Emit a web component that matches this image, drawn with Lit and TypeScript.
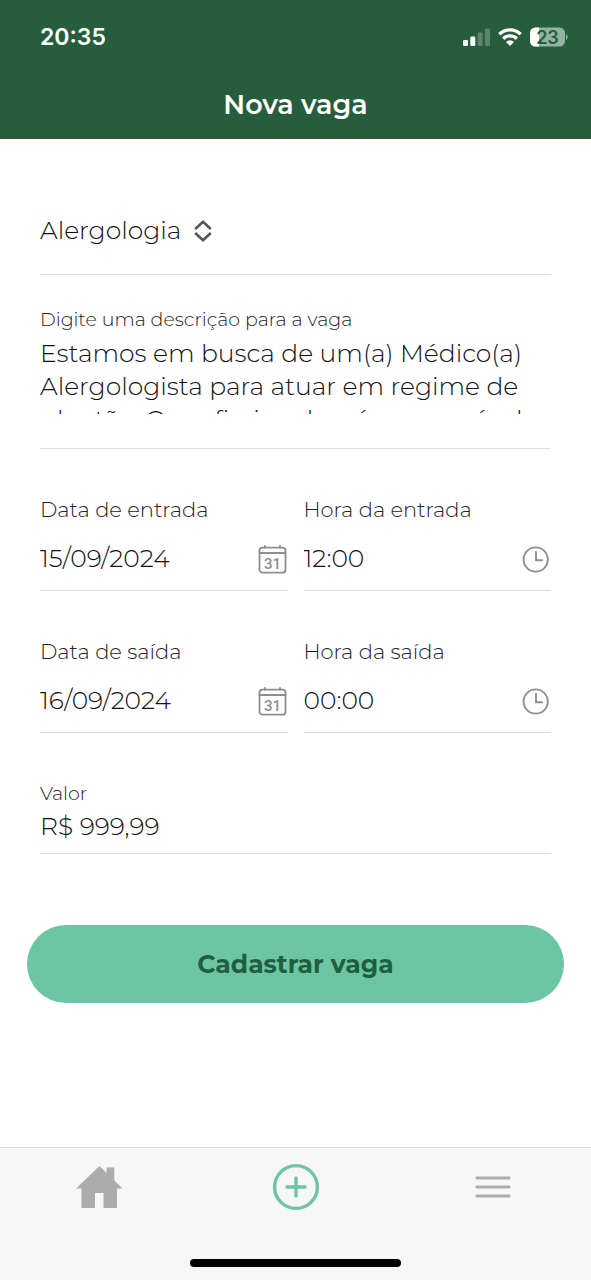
import { LitElement, html, css } from "lit";
import { customElement } from "lit/decorators.js";

const description =
  "Estamos em busca de um(a) Médico(a) Alergologista para atuar em regime de plantão. O profissional será responsável";

const calendarIcon = html`
  <svg class="icon" width="30" height="30" viewBox="0 0 30 30" aria-hidden="true">
    <g fill="none" stroke="#8e8e93" stroke-width="1.8" stroke-linecap="round">
      <rect x="1.5" y="3.7" width="26" height="25" rx="3" />
      <path d="M1.5 9H27.5M7 2V3.7M22 2V3.7" />
    </g>
    <text class="day" x="14.5" y="24.5" text-anchor="middle">31</text>
  </svg>
`;

const clockIcon = html`
  <svg class="icon" width="30" height="30" viewBox="0 0 30 30" aria-hidden="true">
    <g fill="none" stroke="#8e8e93" stroke-width="1.9" stroke-linecap="round" stroke-linejoin="round">
      <circle cx="14.7" cy="15.5" r="12.1" />
      <path d="M15 8V16.2H21" />
    </g>
  </svg>
`;

@customElement("status-bar")
export class StatusBar extends LitElement {
  static styles = css`
    :host {
      display: flex;
      align-items: center;
      justify-content: space-between;
      height: 74px;
      padding: 0 23px 0 40px;
      color: #fff;
    }
    .time {
      font: 600 23px/28px Inter, "Liberation Sans", sans-serif;
    }
    .system {
      display: flex;
      align-items: center;
      gap: 8px;
    }
    .system svg {
      display: block;
    }
    .level {
      font: 600 18px Inter, "Liberation Sans", sans-serif;
      fill: #265d3d;
    }
  `;

  render() {
    return html`
      <span class="time">20:35</span>
      <span class="system">
        <svg width="27" height="18" viewBox="0 0 27 18" fill="#fff" aria-hidden="true">
          <rect x="0" y="12" width="5" height="6" rx="1.3" />
          <rect x="7.3" y="8.5" width="5" height="9.5" rx="1.3" />
          <rect x="14.6" y="4.5" width="5" height="13.5" rx="1.3" opacity=".25" />
          <rect x="22" y="0.5" width="5" height="17.5" rx="1.3" opacity=".25" />
        </svg>
        <svg width="24" height="18" viewBox="0 0 24 18" aria-hidden="true">
          <g fill="none" stroke="#fff" stroke-width="3.4">
            <path d="M1.3 6.3A15.2 15.2 0 0 1 22.7 6.3" />
            <path d="M5.2 10.7A9.6 9.6 0 0 1 18.8 10.7" />
          </g>
          <path d="M12 18L8 14A5.7 5.7 0 0 1 16 14Z" fill="#fff" />
        </svg>
        <svg width="38" height="26" viewBox="0 -3 38 26" aria-hidden="true">
          <rect width="35" height="19" y=".5" rx="5.5" fill="#94b3a0" />
          <path d="M9 .5H5.5A5.5 5.5 0 0 0 0 6V14A5.5 5.5 0 0 0 5.5 19.5H9Z" fill="#fff" />
          <path d="M36 7A3.5 3.5 0 0 1 36 13Z" fill="#94b3a0" />
          <text class="level" x="17.5" y="16.5" text-anchor="middle">23</text>
        </svg>
      </span>
    `;
  }
}

@customElement("tab-bar")
export class TabBar extends LitElement {
  static styles = css`
    :host {
      display: block;
      background: #f7f7f7;
      border-top: 1px solid #dcdcdd;
    }
    .tabs {
      display: grid;
      grid-template-columns: repeat(3, 1fr);
    }
    .tab {
      display: flex;
      align-items: center;
      justify-content: center;
      height: 78px;
    }
    .indicator {
      width: 211px;
      height: 8px;
      margin: 33px auto 13px;
      border-radius: 4px;
      background: #000;
    }
  `;

  render() {
    return html`
      <nav class="tabs">
        <a class="tab" href="#inicio" aria-label="Início">
          <svg width="48" height="44" viewBox="0 0 48 44" fill="#acacac" aria-hidden="true">
            <path d="M24.5 1L31.5 8V2.5H39.3V15.5L47.5 23.5H42V43H28.5V28H20V43H6.5V23.5H1Z" />
          </svg>
        </a>
        <a class="tab" href="#nova-vaga" aria-label="Nova vaga" aria-current="page">
          <svg width="48" height="48" viewBox="0 0 48 48" fill="none" stroke="#6cc5a3" stroke-width="3.4" stroke-linecap="round" aria-hidden="true">
            <circle cx="24" cy="24" r="21.4" />
            <path d="M24 15V33M15 24H33" />
          </svg>
        </a>
        <a class="tab" href="#menu" aria-label="Menu">
          <svg width="36" height="24" viewBox="0 0 36 24" fill="none" stroke="#acacac" stroke-width="2.8" stroke-linecap="round" aria-hidden="true">
            <path d="M1.8 3H34.2M1.8 12H34.2M1.8 21H34.2" />
          </svg>
        </a>
      </nav>
      <div class="indicator"></div>
    `;
  }
}

@customElement("app-root")
export class AppRoot extends LitElement {
  static styles = css`
    :host {
      display: flex;
      flex-direction: column;
      min-height: 100vh;
      background: #fff;
      color: #111;
      font-family: Montserrat, Inter, "Open Sans", sans-serif;
      font-weight: 300;
    }
    * {
      box-sizing: border-box;
    }
    .header {
      background: #265d3d;
      color: #fff;
    }
    .title {
      margin: 0;
      padding: 7px 0 10px;
      font-size: 27px;
      line-height: 48px;
      font-weight: 600;
      text-align: center;
    }
    .form {
      flex: 1;
      display: flex;
      flex-direction: column;
      padding: 64px 27px;
    }
    .fields {
      display: flex;
      flex-direction: column;
      gap: 48px;
      padding: 0 13px;
    }
    .group {
      display: flex;
      flex-direction: column;
      gap: 32px;
    }
    .row {
      display: grid;
      grid-template-columns: repeat(2, minmax(0, 1fr));
      gap: 16px;
    }
    .field {
      display: flex;
      flex-direction: column;
      border-bottom: 1px solid #dcdcdd;
    }
    .picker {
      flex-direction: row;
      align-items: center;
      gap: 12px;
      padding-bottom: 16px;
    }
    .label {
      font-size: 19px;
      line-height: 26px;
      color: #222;
    }
    .label-large {
      font-size: 21px;
    }
    .control {
      display: block;
      min-width: 0;
      margin: 0;
      padding: 0;
      border: 0;
      outline: 0;
      background: none;
      color: inherit;
      font: inherit;
      font-size: 25px;
      line-height: 33px;
      appearance: none;
    }
    .select {
      height: 55px;
    }
    .textarea {
      height: 77px;
      margin: 4px 0 34px;
      overflow: hidden;
      resize: none;
    }
    .line {
      display: flex;
      align-items: center;
      margin-top: 12px;
      padding-bottom: 7px;
    }
    .input {
      padding-bottom: 2px;
    }
    .line .input {
      flex: 1;
      height: 48px;
    }
    .amount {
      height: 40px;
      margin-bottom: 6px;
    }
    .icon {
      flex: none;
    }
    .day {
      font: 500 15px Roboto, sans-serif;
      fill: #8e8e93;
    }
    .submit {
      height: 78px;
      margin-top: 71px;
      border: 0;
      border-radius: 39px;
      background: #6cc5a3;
      color: #1f5f40;
      font: inherit;
      font-size: 25px;
      font-weight: 700;
    }
  `;

  moment(id: string, label: string, value: string, icon: unknown) {
    return html`
      <div class="field">
        <label class="label label-large" for=${id}>${label}</label>
        <div class="line">
          <input class="control input" id=${id} type="text" .value=${value} />
          ${icon}
        </div>
      </div>
    `;
  }

  render() {
    return html`
      <header class="header">
        <status-bar></status-bar>
        <h1 class="title">Nova vaga</h1>
      </header>
      <form class="form" @submit=${(e: Event) => e.preventDefault()}>
        <div class="fields">
          <div class="group">
            <div class="field picker">
              <select class="control select" aria-label="Especialidade">
                <option>Alergologia</option>
              </select>
              <svg width="18" height="22" viewBox="0 0 18 22" fill="none" stroke="#555" stroke-width="2.6" aria-hidden="true">
                <path d="M1.2 9L9 1.8L16.8 9M1.2 13L9 20.2L16.8 13" />
              </svg>
            </div>
            <div class="field">
              <label class="label" for="description">Digite uma descrição para a vaga</label>
              <textarea class="control textarea" id="description" .value=${description}></textarea>
            </div>
          </div>
          <div class="row">
            ${this.moment("start-date", "Data de entrada", "15/09/2024", calendarIcon)}
            ${this.moment("start-time", "Hora da entrada", "12:00", clockIcon)}
          </div>
          <div class="row">
            ${this.moment("end-date", "Data de saída", "16/09/2024", calendarIcon)}
            ${this.moment("end-time", "Hora da saída", "00:00", clockIcon)}
          </div>
          <div class="field">
            <label class="label" for="amount">Valor</label>
            <input class="control input amount" id="amount" type="text" value="R$ 999,99" />
          </div>
        </div>
        <button class="submit" type="submit">Cadastrar vaga</button>
      </form>
      <tab-bar></tab-bar>
    `;
  }
}
